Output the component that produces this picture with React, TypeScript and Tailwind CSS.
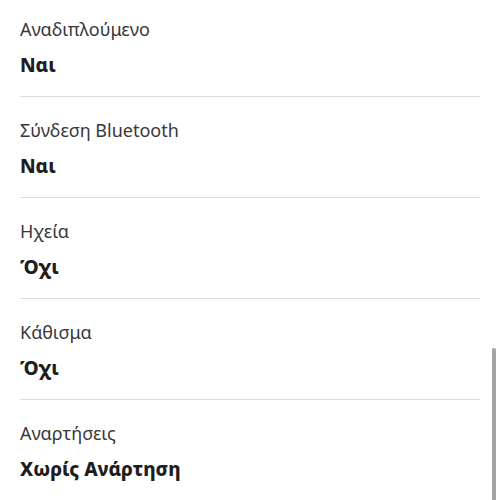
import React from 'react';

const specs = [
  { label: 'Αναδιπλούμενο', value: 'Ναι' },
  { label: 'Σύνδεση Bluetooth', value: 'Ναι' },
  { label: 'Ηχεία', value: 'Όχι' },
  { label: 'Κάθισμα', value: 'Όχι' },
  { label: 'Αναρτήσεις', value: 'Χωρίς Ανάρτηση' },
];

const App = () => {
  return (
    <div className="relative w-[500px] h-[500px] overflow-hidden bg-white font-['Noto_Sans',sans-serif]">
      <div className="-mt-[4px] px-5">
        {specs.map((spec) => (
          <div key={spec.label} className="flex flex-col gap-3 pt-[21px] pb-[19px] border-b border-[#dcdcdc]">
            <div className="text-[18px] leading-6 text-[#383838]">{spec.label}</div>
            <div className="text-[19px] leading-6 font-extrabold text-[#1e1e1e]">{spec.value}</div>
          </div>
        ))}
      </div>
      {/* overlay scrollbar */}
      <div className="absolute right-[4px] top-[348px] w-[4px] h-[160px] rounded-full bg-[#a4a4a4]" />
    </div>
  );
};

export default App;
